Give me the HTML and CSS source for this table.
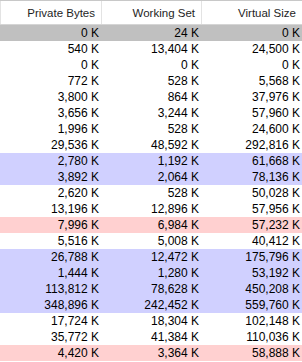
FILE: index.html
```html
<!DOCTYPE html>
<html>
<head>
<meta charset="utf-8">
<link rel="stylesheet" href="styles.css">
</head>
<body>
<div class="list">
  <div class="head">
    <div class="hcell">Private Bytes</div>
    <div class="hcell">Working Set</div>
    <div class="hcell">Virtual Size</div>
  </div>
  <div class="row sel"><span>0 K</span><span>24 K</span><span>0 K</span></div>
  <div class="row"><span>540 K</span><span>13,404 K</span><span>24,500 K</span></div>
  <div class="row"><span>0 K</span><span>0 K</span><span>0 K</span></div>
  <div class="row"><span>772 K</span><span>528 K</span><span>5,568 K</span></div>
  <div class="row"><span>3,800 K</span><span>864 K</span><span>37,976 K</span></div>
  <div class="row"><span>3,656 K</span><span>3,244 K</span><span>57,960 K</span></div>
  <div class="row"><span>1,996 K</span><span>528 K</span><span>24,600 K</span></div>
  <div class="row"><span>29,536 K</span><span>48,592 K</span><span>292,816 K</span></div>
  <div class="row blue"><span>2,780 K</span><span>1,192 K</span><span>61,668 K</span></div>
  <div class="row blue"><span>3,892 K</span><span>2,064 K</span><span>78,136 K</span></div>
  <div class="row"><span>2,620 K</span><span>528 K</span><span>50,028 K</span></div>
  <div class="row"><span>13,196 K</span><span>12,896 K</span><span>57,956 K</span></div>
  <div class="row pink"><span>7,996 K</span><span>6,984 K</span><span>57,232 K</span></div>
  <div class="row"><span>5,516 K</span><span>5,008 K</span><span>40,412 K</span></div>
  <div class="row blue"><span>26,788 K</span><span>12,472 K</span><span>175,796 K</span></div>
  <div class="row blue"><span>1,444 K</span><span>1,280 K</span><span>53,192 K</span></div>
  <div class="row blue"><span>113,812 K</span><span>78,628 K</span><span>450,208 K</span></div>
  <div class="row blue"><span>348,896 K</span><span>242,452 K</span><span>559,760 K</span></div>
  <div class="row"><span>17,724 K</span><span>18,304 K</span><span>102,148 K</span></div>
  <div class="row"><span>35,772 K</span><span>41,384 K</span><span>110,036 K</span></div>
  <div class="row pink"><span>4,420 K</span><span>3,364 K</span><span>58,888 K</span></div>
</div>
</body>
</html>
```
FILE: styles.css
```css
html, body {
  margin: 0;
  padding: 0;
  background: #ffffff;
  overflow: hidden;
}
.list {
  width: 302px;
  height: 362px;
  overflow: hidden;
  font-family: "Liberation Sans", Arial, sans-serif;
  color: #000;
}
.head {
  display: grid;
  grid-template-columns: 101px 100px 101px;
  height: 24px;
  border-bottom: 1px solid #d5d5d5;
  border-top: 1px solid #c8c8c8;
  box-sizing: border-box;
  height: 25px;
}
.hcell {
  border-left: 1px solid #e3e3e3;
  display: flex;
  align-items: center;
  justify-content: flex-end;
  padding-right: 6px;
  font-size: 11.5px;
  color: #1e1e1e;
}
.hcell:first-child {
  border-left-color: #e3e3e3;
}
.row {
  display: grid;
  grid-template-columns: 101px 100px 101px;
  height: 16px;
  font-size: 12px;
  line-height: 16px;
}
.row span {
  text-align: right;
  padding-right: 2px;
}
.sel { background: #c0c0c0; }
.blue { background: #d0d0ff; }
.pink { background: #ffd0d0; }
```
